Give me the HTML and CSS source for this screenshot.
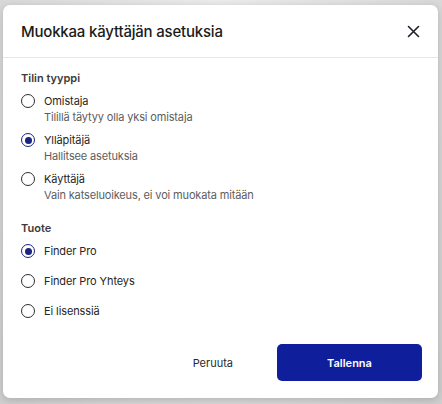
FILE: index.html
```html
<!DOCTYPE html>
<html lang="fi">
<head>
<meta charset="utf-8">
<title>Muokkaa käyttäjän asetuksia</title>
<link rel="stylesheet" href="styles.css">
</head>
<body>
<div class="dialog">
  <div class="dialog-header">
    <h1 class="dialog-title">Muokkaa käyttäjän asetuksia</h1>
    <button class="close-btn" aria-label="Sulje">
      <svg width="13" height="13" viewBox="0 0 13 13"><path d="M1.5 1.5 L11.5 11.5 M11.5 1.5 L1.5 11.5" stroke="#1f1f2a" stroke-width="1.6" stroke-linecap="round" fill="none"/></svg>
    </button>
  </div>
  <div class="dialog-body">
    <div class="section">
      <div class="section-title">Tilin tyyppi</div>
      <div class="options options-desc">
        <label class="option">
          <span class="radio"></span>
          <span class="option-text">
            <span class="option-label">Omistaja</span>
            <span class="option-desc">Tilillä täytyy olla yksi omistaja</span>
          </span>
        </label>
        <label class="option">
          <span class="radio checked"></span>
          <span class="option-text">
            <span class="option-label">Ylläpitäjä</span>
            <span class="option-desc">Hallitsee asetuksia</span>
          </span>
        </label>
        <label class="option">
          <span class="radio"></span>
          <span class="option-text">
            <span class="option-label">Käyttäjä</span>
            <span class="option-desc">Vain katseluoikeus, ei voi muokata mitään</span>
          </span>
        </label>
      </div>
    </div>
    <div class="section section-second">
      <div class="section-title">Tuote</div>
      <div class="options options-plain">
        <label class="option">
          <span class="radio checked"></span>
          <span class="option-label">Finder Pro</span>
        </label>
        <label class="option">
          <span class="radio"></span>
          <span class="option-label">Finder Pro Yhteys</span>
        </label>
        <label class="option">
          <span class="radio"></span>
          <span class="option-label">Ei lisenssiä</span>
        </label>
      </div>
    </div>
  </div>
  <div class="dialog-footer">
    <button class="btn btn-ghost">Peruuta</button>
    <button class="btn btn-primary">Tallenna</button>
  </div>
</div>
</body>
</html>
```
FILE: styles.css
```css
* { box-sizing: border-box; }
html, body { margin: 0; padding: 0; }
body {
  width: 442px;
  height: 404px;
  overflow: hidden;
  background: radial-gradient(ellipse at 50% 0%, #ececec 0%, #dcdcdc 60%, #cfcfcf 100%);
  font-family: Inter, "Noto Sans", sans-serif;
  color: #1c1c1c;
  padding: 5px 4px 0 3px;
}
.dialog {
  width: 435px;
  height: 393px;
  background: #fff;
  border-radius: 7px;
  box-shadow: 0 2px 8px rgba(0,0,0,0.18);
  display: flex;
  flex-direction: column;
}
.dialog-header {
  height: 53px;
  display: flex;
  align-items: center;
  justify-content: space-between;
  padding: 0 17px 0 18px;
  border-bottom: 1px solid #e6e6e6;
}
.dialog-title {
  margin: 0;
  font-size: 15px;
  font-weight: 500;
  color: #1b1b1b;
  letter-spacing: -0.2px;
}
.close-btn {
  border: 0;
  background: none;
  padding: 0;
  width: 16px;
  height: 16px;
  display: flex;
  align-items: center;
  justify-content: center;
}
.dialog-body {
  padding: 12px 18px 0 18px;
  flex: 1;
}
.section-title {
  font-size: 11px;
  font-weight: 600;
  line-height: 16px;
  color: #3b3b3b;
}
.section-second { margin-top: 17px; }
.options {
  display: flex;
  flex-direction: column;
  margin-top: 7px;
}
.options-desc { gap: 7px; }
.options-plain { gap: 14px; }
.option {
  display: flex;
  align-items: flex-start;
  gap: 9px;
}
.radio {
  width: 14px;
  height: 14px;
  border-radius: 50%;
  border: 1.5px solid #2e2e2e;
  margin-top: 1px;
  flex: none;
  display: flex;
  align-items: center;
  justify-content: center;
}
.radio.checked { border-color: #1a2380; }
.radio.checked::after {
  content: "";
  width: 7px;
  height: 7px;
  border-radius: 50%;
  background: #1a2380;
}
.option-text {
  display: flex;
  flex-direction: column;
}
.option-label {
  font-size: 11px;
  line-height: 16px;
  color: #262626;
  letter-spacing: -0.1px;
}
.option-desc {
  font-size: 11px;
  line-height: 16px;
  color: #5d5d5d;
  letter-spacing: -0.15px;
}
.dialog-footer {
  display: flex;
  justify-content: flex-end;
  align-items: center;
  gap: 21px;
  padding: 0 16px 17px 0;
}
.btn {
  font-family: Inter, "Noto Sans", sans-serif;
  font-size: 11px;
  height: 37px;
  border-radius: 5px;
  border: 0;
  cursor: pointer;
}
.btn-ghost {
  background: none;
  color: #2a2a2a;
  padding: 0 23px;
}
.btn-primary {
  width: 145px;
  background: #0f1e9b;
  color: #fff;
  font-weight: 600;
}
```
